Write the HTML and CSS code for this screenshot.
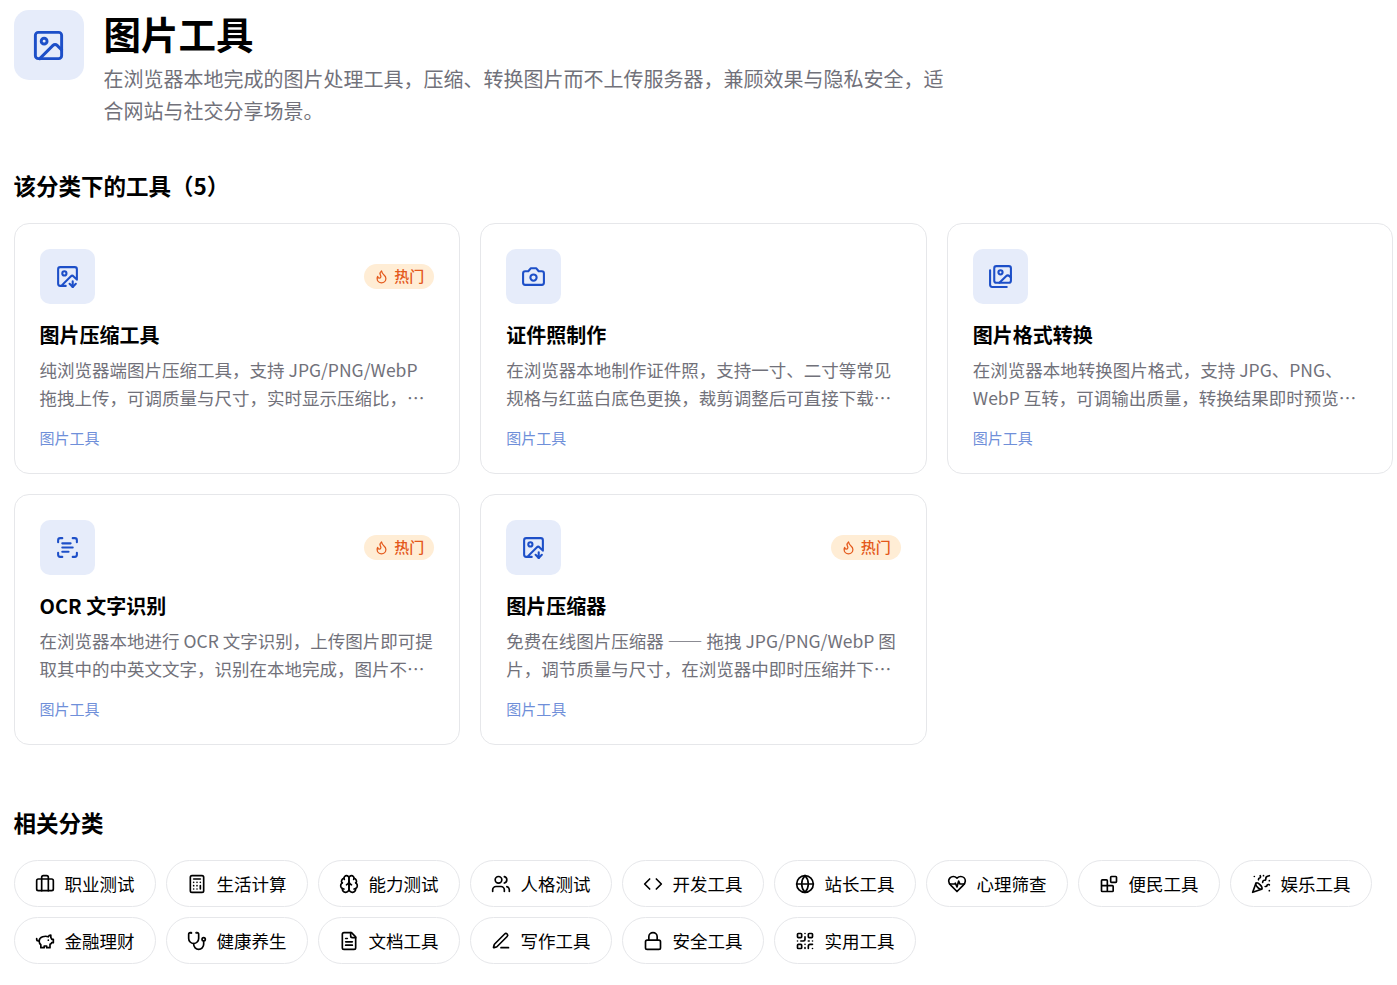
FILE: index.html
```html
<!DOCTYPE html>
<html lang="zh-CN">
<head>
  <meta charset="UTF-8" />
  <meta name="viewport" content="width=device-width, initial-scale=1.0" />
  <title>图片工具</title>
  <link rel="stylesheet" href="styles.css">
</head>
<body>

  <header class="category-header">
    <div class="category-icon">
      <svg viewBox="0 0 24 24"><rect width="18" height="18" x="3" y="3" rx="2"/><circle cx="9" cy="9" r="2"/><path d="m21 15-3.086-3.086a2 2 0 0 0-2.828 0L6 21"/></svg>
    </div>
    <div class="category-text">
      <h1>图片工具</h1>
      <p>在浏览器本地完成的图片处理工具，压缩、转换图片而不上传服务器，兼顾效果与隐私安全，适合网站与社交分享场景。</p>
    </div>
  </header>

  <main>
    <section class="tools">
      <h2>该分类下的工具（5）</h2>
      <div class="tool-grid">
        <a class="tool-card">
          <div class="tool-top">
            <div class="tool-icon">
              <svg viewBox="0 0 24 24"><path d="M10.3 21H5a2 2 0 0 1-2-2V5a2 2 0 0 1 2-2h14a2 2 0 0 1 2 2v10l-3.1-3.1a2 2 0 0 0-2.814.014L6 21"/><path d="m14 19 3 3v-5.5"/><path d="m17 22 3-3"/><circle cx="9" cy="9" r="2"/></svg>
            </div>
            <span class="hot"><svg viewBox="0 0 24 24"><path d="M8.5 14.5A2.5 2.5 0 0 0 11 12c0-1.38-.5-2-1-3-1.072-2.143-.224-4.054 2-6 .5 2.5 2 4.9 4 6.5 2 1.6 3 3.5 3 5.5a7 7 0 1 1-14 0c0-1.153.433-2.294 1-3a2.5 2.5 0 0 0 2.5 2.5z"/></svg>热门</span>
          </div>
          <h3>图片压缩工具</h3>
          <p>纯浏览器端图片压缩工具，支持 JPG/PNG/WebP 拖拽上传，可调质量与尺寸，实时显示压缩比，…</p>
          <span class="tool-cat">图片工具</span>
        </a>
        <a class="tool-card">
          <div class="tool-top">
            <div class="tool-icon">
              <svg viewBox="0 0 24 24"><path d="M14.5 4h-5L7 7H4a2 2 0 0 0-2 2v9a2 2 0 0 0 2 2h16a2 2 0 0 0 2-2V9a2 2 0 0 0-2-2h-3l-2.5-3z"/><circle cx="12" cy="13" r="3"/></svg>
            </div>
          </div>
          <h3>证件照制作</h3>
          <p>在浏览器本地制作证件照，支持一寸、二寸等常见规格与红蓝白底色更换，裁剪调整后可直接下载…</p>
          <span class="tool-cat">图片工具</span>
        </a>
        <a class="tool-card">
          <div class="tool-top">
            <div class="tool-icon">
              <svg viewBox="0 0 24 24"><path d="M18 22H4a2 2 0 0 1-2-2V6"/><path d="m22 13-1.296-1.296a2.41 2.41 0 0 0-3.408 0L11 18"/><circle cx="12" cy="8" r="2"/><rect width="16" height="16" x="6" y="2" rx="2"/></svg>
            </div>
          </div>
          <h3>图片格式转换</h3>
          <p>在浏览器本地转换图片格式，支持 JPG、PNG、WebP 互转，可调输出质量，转换结果即时预览…</p>
          <span class="tool-cat">图片工具</span>
        </a>
        <a class="tool-card">
          <div class="tool-top">
            <div class="tool-icon">
              <svg viewBox="0 0 24 24"><path d="M3 7V5a2 2 0 0 1 2-2h2"/><path d="M17 3h2a2 2 0 0 1 2 2v2"/><path d="M21 17v2a2 2 0 0 1-2 2h-2"/><path d="M7 21H5a2 2 0 0 1-2-2v-2"/><path d="M7 8h8"/><path d="M7 12h10"/><path d="M7 16h6"/></svg>
            </div>
            <span class="hot"><svg viewBox="0 0 24 24"><path d="M8.5 14.5A2.5 2.5 0 0 0 11 12c0-1.38-.5-2-1-3-1.072-2.143-.224-4.054 2-6 .5 2.5 2 4.9 4 6.5 2 1.6 3 3.5 3 5.5a7 7 0 1 1-14 0c0-1.153.433-2.294 1-3a2.5 2.5 0 0 0 2.5 2.5z"/></svg>热门</span>
          </div>
          <h3>OCR 文字识别</h3>
          <p>在浏览器本地进行 OCR 文字识别，上传图片即可提取其中的中英文文字，识别在本地完成，图片不…</p>
          <span class="tool-cat">图片工具</span>
        </a>
        <a class="tool-card">
          <div class="tool-top">
            <div class="tool-icon">
              <svg viewBox="0 0 24 24"><path d="M10.3 21H5a2 2 0 0 1-2-2V5a2 2 0 0 1 2-2h14a2 2 0 0 1 2 2v10l-3.1-3.1a2 2 0 0 0-2.814.014L6 21"/><path d="m14 19 3 3v-5.5"/><path d="m17 22 3-3"/><circle cx="9" cy="9" r="2"/></svg>
            </div>
            <span class="hot"><svg viewBox="0 0 24 24"><path d="M8.5 14.5A2.5 2.5 0 0 0 11 12c0-1.38-.5-2-1-3-1.072-2.143-.224-4.054 2-6 .5 2.5 2 4.9 4 6.5 2 1.6 3 3.5 3 5.5a7 7 0 1 1-14 0c0-1.153.433-2.294 1-3a2.5 2.5 0 0 0 2.5 2.5z"/></svg>热门</span>
          </div>
          <h3>图片压缩器</h3>
          <p>免费在线图片压缩器 —— 拖拽 JPG/PNG/WebP 图片，调节质量与尺寸，在浏览器中即时压缩并下…</p>
          <span class="tool-cat">图片工具</span>
        </a>
      </div>
    </section>

    <section class="related">
      <h2>相关分类</h2>
      <div class="pills">
        <a class="pill"><svg viewBox="0 0 24 24"><path d="M16 20V4a2 2 0 0 0-2-2h-4a2 2 0 0 0-2 2v16"/><rect width="20" height="14" x="2" y="6" rx="2"/></svg>职业测试</a>
        <a class="pill"><svg viewBox="0 0 24 24"><rect width="16" height="20" x="4" y="2" rx="2"/><path d="M8 6h8"/><path d="M16 14v4"/><path d="M16 10h.01"/><path d="M12 10h.01"/><path d="M8 10h.01"/><path d="M12 14h.01"/><path d="M8 14h.01"/><path d="M12 18h.01"/><path d="M8 18h.01"/></svg>生活计算</a>
        <a class="pill"><svg viewBox="0 0 24 24"><path d="M12 5a3 3 0 1 0-5.997.125 4 4 0 0 0-2.526 5.77 4 4 0 0 0 .556 6.588A4 4 0 1 0 12 18Z"/><path d="M12 5a3 3 0 1 1 5.997.125 4 4 0 0 1 2.526 5.77 4 4 0 0 1-.556 6.588A4 4 0 1 1 12 18Z"/><path d="M15 13a4.5 4.5 0 0 1-3-4 4.5 4.5 0 0 1-3 4"/><path d="M17.599 6.5a3 3 0 0 0 .399-1.375"/><path d="M6.003 5.125A3 3 0 0 0 6.401 6.5"/><path d="M3.477 10.896a4 4 0 0 1 .585-.396"/><path d="M19.938 10.5a4 4 0 0 1 .585.396"/><path d="M6 18a4 4 0 0 1-1.967-.516"/><path d="M19.967 17.484A4 4 0 0 1 18 18"/></svg>能力测试</a>
        <a class="pill"><svg viewBox="0 0 24 24"><path d="M16 21v-2a4 4 0 0 0-4-4H6a4 4 0 0 0-4 4v2"/><circle cx="9" cy="7" r="4"/><path d="M22 21v-2a4 4 0 0 0-3-3.87"/><path d="M16 3.13a4 4 0 0 1 0 7.75"/></svg>人格测试</a>
        <a class="pill"><svg viewBox="0 0 24 24"><path d="m16 18 6-6-6-6"/><path d="m8 6-6 6 6 6"/></svg>开发工具</a>
        <a class="pill"><svg viewBox="0 0 24 24"><circle cx="12" cy="12" r="10"/><path d="M12 2a14.5 14.5 0 0 0 0 20 14.5 14.5 0 0 0 0-20"/><path d="M2 12h20"/></svg>站长工具</a>
        <a class="pill"><svg viewBox="0 0 24 24"><path d="M19 14c1.49-1.46 3-3.21 3-5.5A5.5 5.5 0 0 0 16.5 3c-1.76 0-3 .5-4.5 2-1.5-1.5-2.74-2-4.5-2A5.5 5.5 0 0 0 2 8.5c0 2.3 1.5 4.05 3 5.5l7 7Z"/><path d="M3.22 12H9.5l.5-1 2 4.5 2-7 1.5 3.5h5.27"/></svg>心理筛查</a>
        <a class="pill"><svg viewBox="0 0 24 24"><rect width="7" height="7" x="14" y="3" rx="1"/><path d="M10 21V8a1 1 0 0 0-1-1H4a1 1 0 0 0-1 1v12a1 1 0 0 0 1 1h12a1 1 0 0 0 1-1v-5a1 1 0 0 0-1-1H3"/></svg>便民工具</a>
        <a class="pill"><svg viewBox="0 0 24 24"><path d="M5.8 11.3 2 22l10.7-3.79"/><path d="M4 3h.01"/><path d="M22 8h.01"/><path d="M15 2h.01"/><path d="M22 20h.01"/><path d="m22 2-2.24.75a2.9 2.9 0 0 0-1.96 3.12c.1.86-.57 1.63-1.45 1.63h-.38c-.86 0-1.6.6-1.76 1.44L14 10"/><path d="m22 13-.82-.33c-.86-.34-1.82.2-1.98 1.11c-.11.7-.72 1.22-1.43 1.22H17"/><path d="m11 2 .33.82c.34.86-.2 1.82-1.11 1.98C9.52 4.9 9 5.52 9 6.23V7"/><path d="M11 13c1.93 1.93 2.83 4.17 2 5-.83.83-3.07-.07-5-2-1.93-1.93-2.83-4.17-2-5 .83-.83 3.07.07 5 2Z"/></svg>娱乐工具</a>
        <a class="pill"><svg viewBox="0 0 24 24"><path d="M19 5c-1.5 0-2.8 1.4-3 2-3.5-1.5-11-.3-11 5 0 1.8 0 3 2 4.5V20h4v-2h3v2h4v-4c1-.5 1.7-1 2-2h2v-4h-2c0-1-.5-1.5-1-2V5z"/><path d="M2 9v1c0 1.1.9 2 2 2h1"/><path d="M16 11h.01"/></svg>金融理财</a>
        <a class="pill"><svg viewBox="0 0 24 24"><path d="M4.8 2.3A.3.3 0 1 0 5 2H4a2 2 0 0 0-2 2v5a6 6 0 0 0 6 6 6 6 0 0 0 6-6V4a2 2 0 0 0-2-2h-1a.2.2 0 1 0 .3.3"/><path d="M8 15v1a6 6 0 0 0 6 6 6 6 0 0 0 6-6v-4"/><circle cx="20" cy="10" r="2"/></svg>健康养生</a>
        <a class="pill"><svg viewBox="0 0 24 24"><path d="M15 2H6a2 2 0 0 0-2 2v16a2 2 0 0 0 2 2h12a2 2 0 0 0 2-2V7Z"/><path d="M14 2v4a2 2 0 0 0 2 2h4"/><path d="M10 9H8"/><path d="M16 13H8"/><path d="M16 17H8"/></svg>文档工具</a>
        <a class="pill"><svg viewBox="0 0 24 24"><path d="M12 20h9"/><path d="M16.376 3.622a1 1 0 0 1 3.002 3.002L7.368 18.635a2 2 0 0 1-.855.506l-2.872.838a.5.5 0 0 1-.62-.62l.838-2.872a2 2 0 0 1 .506-.854z"/></svg>写作工具</a>
        <a class="pill"><svg viewBox="0 0 24 24"><rect width="18" height="11" x="3" y="11" rx="2"/><path d="M7 11V7a5 5 0 0 1 10 0v4"/></svg>安全工具</a>
        <a class="pill"><svg viewBox="0 0 24 24"><rect width="5" height="5" x="3" y="3" rx="1"/><rect width="5" height="5" x="16" y="3" rx="1"/><rect width="5" height="5" x="3" y="16" rx="1"/><path d="M21 16h-3a2 2 0 0 0-2 2v3"/><path d="M21 21v.01"/><path d="M12 7v3a2 2 0 0 1-2 2H7"/><path d="M3 12h.01"/><path d="M12 3h.01"/><path d="M12 16v.01"/><path d="M16 12h1"/><path d="M21 12v.01"/><path d="M12 21v-1"/></svg>实用工具</a>
      </div>
    </section>
  </main>

</body>
</html>
```

FILE: styles.css
```css
:root {
  --primary: #1d4fc8;
  --text: #000;
  --muted: #71717a;
  --border: #e6e7ea;
}

* {
  box-sizing: border-box;
}

body {
  margin: 0;
  padding: 10px 3.6px 20px 13.6px;
  font-family: "Noto Sans CJK SC", sans-serif;
  color: var(--text);
  background: #fff;
}

h1, h2, h3, p {
  margin: 0;
}

svg {
  display: block;
  flex-shrink: 0;
  fill: none;
  stroke: currentColor;
  stroke-width: 2;
  stroke-linecap: round;
  stroke-linejoin: round;
}

.category-header {
  display: flex;
  align-items: flex-start;
  gap: 20px;
}

.category-icon {
  width: 70px;
  height: 70px;
  display: flex;
  align-items: center;
  justify-content: center;
  flex-shrink: 0;
  border-radius: 15px;
  background: #e6ecfa;
  color: var(--primary);
}

.category-icon svg {
  width: 35px;
  height: 35px;
}

.category-text {
  max-width: 840px;
}

h1 {
  font-size: 37.5px;
  line-height: 45px;
  font-weight: 700;
}

.category-text p {
  margin-top: 7.5px;
  font-size: 20px;
  line-height: 32px;
  color: var(--muted);
}

h2 {
  font-size: 22.5px;
  line-height: 35px;
  font-weight: 600;
}

.tools {
  margin-top: 41px;
}

.tool-grid {
  display: grid;
  grid-template-columns: repeat(3, 1fr);
  gap: 20px;
  margin-top: 20px;
}

.tool-card {
  padding: 25px;
  border: 1px solid var(--border);
  border-radius: 15px;
}

.tool-top {
  display: flex;
  align-items: center;
  justify-content: space-between;
}

.tool-icon {
  width: 55px;
  height: 55px;
  display: flex;
  align-items: center;
  justify-content: center;
  border-radius: 10px;
  background: #e6ecfa;
  color: var(--primary);
}

.tool-icon svg {
  width: 25px;
  height: 25px;
}

.hot {
  display: flex;
  align-items: center;
  gap: 5px;
  padding: 2.5px 10px;
  border-radius: 999px;
  background: #ffedd5;
  color: #e4581a;
  font-size: 15px;
  line-height: 20px;
  font-weight: 500;
}

.hot svg {
  width: 15px;
  height: 15px;
}

h3 {
  margin-top: 15px;
  font-size: 20px;
  line-height: 31px;
  font-weight: 600;
}

.tool-card p {
  margin-top: 6px;
  font-size: 17.5px;
  line-height: 28.44px;
  color: var(--muted);
}

.tool-cat {
  display: block;
  margin-top: 15.2px;
  font-size: 15px;
  line-height: 20px;
  color: #6f8fd9;
}

.related {
  margin-top: 60.8px;
}

.pills {
  display: flex;
  flex-wrap: wrap;
  gap: 10px;
  margin-top: 20px;
}

.pill {
  display: flex;
  align-items: center;
  gap: 10px;
  padding: 10px 20px;
  border: 1px solid var(--border);
  border-radius: 999px;
  font-size: 17.5px;
  line-height: 25px;
}

.pill svg {
  width: 20px;
  height: 20px;
}
```
